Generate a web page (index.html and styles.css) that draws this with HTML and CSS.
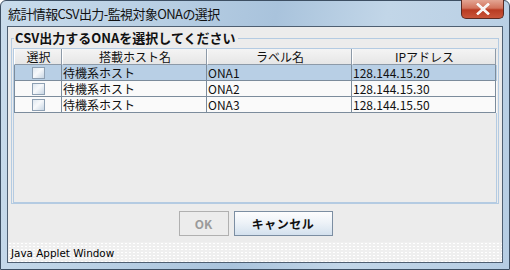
FILE: index.html
```html
<!DOCTYPE html>
<html lang="ja">
<head>
<meta charset="utf-8">
<link rel="stylesheet" href="styles.css">
</head>
<body>
<div class="window">
  <div class="titlebar">
    <span class="title">統計情報CSV出力-監視対象ONAの選択</span>
    <span class="close"><svg width="18" height="12" viewBox="0 0 18 12"><path d="M4 1.5 L14 10.5 M14 1.5 L4 10.5" stroke="#fff" stroke-width="2.6" stroke-linecap="square"/><path d="M4 1.5 L14 10.5 M14 1.5 L4 10.5" stroke="#f4f4f4" stroke-width="1.2"/></svg></span>
  </div>
  <div class="content">
    <div class="panel">
      <div class="group">
        <div class="legend">CSV出力するONAを選択してください</div>
        <div class="scroll">
          <div class="grid head">
            <div class="cell">選択</div>
            <div class="cell">搭載ホスト名</div>
            <div class="cell">ラベル名</div>
            <div class="cell">IPアドレス</div>
          </div>
          <div class="grid row sel">
            <div class="cell chk"><span class="box"></span></div>
            <div class="cell">待機系ホスト</div>
            <div class="cell">ONA1</div>
            <div class="cell">128.144.15.20</div>
          </div>
          <div class="grid row">
            <div class="cell chk"><span class="box"></span></div>
            <div class="cell">待機系ホスト</div>
            <div class="cell">ONA2</div>
            <div class="cell">128.144.15.30</div>
          </div>
          <div class="grid row">
            <div class="cell chk"><span class="box"></span></div>
            <div class="cell">待機系ホスト</div>
            <div class="cell">ONA3</div>
            <div class="cell">128.144.15.50</div>
          </div>
        </div>
      </div>
      <div class="buttons">
        <button class="btn ok" disabled>OK</button>
        <button class="btn cancel">キャンセル</button>
      </div>
    </div>
    <div class="status">Java Applet Window</div>
  </div>
</div>
</body>
</html>
```
FILE: styles.css
```css
* { box-sizing: border-box; }
html, body { margin: 0; padding: 0; background: #ffffff; }
body { width: 510px; height: 270px; overflow: hidden; font-family: "Noto Sans CJK JP", "DejaVu Sans", sans-serif; }

.window {
  width: 510px; height: 270px;
  border: 1px solid #3d4f63;
  border-radius: 6px 6px 0 0;
  background: linear-gradient(100deg, #c9dcec 0%, #b7cee3 30%, #a9c3dc 50%, #c2d6e8 70%, #b6cde3 100%);
  display: flex; flex-direction: column;
  padding: 0 6px 6px 6px;
}
.titlebar {
  height: 26px;
  display: flex; align-items: flex-start; justify-content: space-between;
}
.title {
  margin-top: 5px; margin-left: 1px;
  font-size: 13px; line-height: 16px; color: #111;
  letter-spacing: -0.6px;
}
.close {
  width: 43px; height: 19px;
  margin-top: -1px; margin-right: -1px;
  border: 1px solid #5a2a22;
  border-top: none;
  border-radius: 0 0 5px 5px;
  background: linear-gradient(#e3a593 0%, #d2735c 45%, #b83b22 55%, #c9553a 100%);
  display: flex; align-items: center; justify-content: center;
}
.content {
  flex: 1;
  border: 1px solid #4e5f72;
  background: #ececec;
  display: flex; flex-direction: column;
}
.panel { flex: 1; padding: 3px 3px 0 3px; display: flex; flex-direction: column; }
.group {
  position: relative;
  margin-top: 8px;
  height: 166px;
  border: 1px solid #b4cbe2;
  padding: 9px 1px 0 1px;
}
.legend {
  position: absolute; left: 2px; top: -10px;
  background: #ececec; padding: 0 2px 0 1px;
  font-size: 13px; line-height: 17px; font-weight: bold; color: #111;
}
.scroll {
  height: 155px;
  border: 1px solid #b4cbe2;
  background: #ececec;
}
.grid { display: grid; grid-template-columns: 48px 145px 145px 144px; width: 483px; }
.cell { font-size: 12px; line-height: 15px; padding-left: 1px; color: #111; white-space: nowrap; overflow: hidden; }
.head { height: 16px; background: #ececec; }
.head .cell {
  text-align: center;
  border-right: 1px solid #8d9aa8;
  border-bottom: 1px solid #8d9aa8;
  background: linear-gradient(#f4f4f4, #e6e6e6);
  border-left: 1px solid #fff;
}
.row { height: 16px; background: #fafafa; }
.row .cell { border-right: 1px solid #7c8c9c; border-bottom: 1px solid #7c8c9c; }
.row .cell:first-child { border-left: 1px solid #7c8c9c; }
.sel { background: #b8cfe5; }
.chk { display: flex; align-items: center; justify-content: center; }
.box {
  width: 13px; height: 12px;
  border: 1px solid #8ea0b3;
  background: linear-gradient(135deg, #dfe8f1 0%, #f7f9fb 45%, #c8d6e4 100%);
}
.buttons {
  height: 38px;
  display: flex; justify-content: center; align-items: flex-start;
  gap: 5px;
  padding-top: 7px;
  padding-left: 1px;
}
.btn {
  height: 25px;
  font-family: "Noto Sans CJK JP", "DejaVu Sans", sans-serif;
  font-size: 12px; font-weight: bold; line-height: 14px;
  padding: 0;
}
.ok {
  width: 50px;
  border: 1px solid #b0b0b0;
  background: #ececec;
  color: #9a9a9a;
}
.cancel {
  width: 99px;
  border: 1px solid #7c8ea2;
  background: linear-gradient(#fdfdfe 0%, #eef3f8 45%, #d4e1ee 100%);
  color: #111;
  letter-spacing: 0.5px;
}
.status {
  height: 20px;
  padding-left: 3px;
  padding-top: 4px;
  font-family: "DejaVu Sans", sans-serif;
  font-size: 10.4px; line-height: 15px; color: #000;
  background-color: #efefef;
  background-image: radial-gradient(circle, #ffffff 0.8px, transparent 1px);
  background-size: 4px 3px;
}
```
